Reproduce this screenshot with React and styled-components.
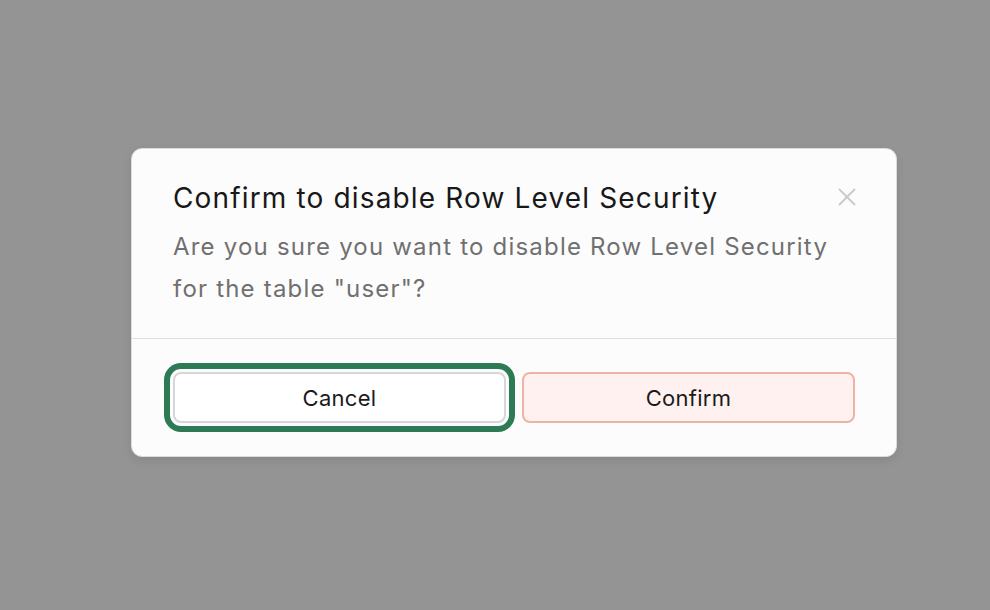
import React from 'react'
import styled, { createGlobalStyle } from 'styled-components'

const GlobalStyle = createGlobalStyle`
  html, body {
    margin: 0;
    padding: 0;
    background: #949494;
  }
  body {
    font-family: Inter, "Noto Sans", sans-serif;
  }
`

const Overlay = styled.div`
  width: 990px;
  height: 610px;
  box-sizing: border-box;
  padding: 148px 0 0 131px;
`

const Dialog = styled.div`
  width: 766px;
  box-sizing: border-box;
  background: #fcfcfc;
  border: 1px solid #dcdcdc;
  border-radius: 11px;
  box-shadow: 0 4px 10px rgba(0, 0, 0, 0.08);
  overflow: hidden;
`

const Header = styled.div`
  position: relative;
  padding: 29px 41px 28px 41px;
  border-bottom: 1px solid #dfdfdf;
`

const Title = styled.h2`
  margin: 0;
  font-size: 28px;
  font-weight: 400;
  color: #181818;
  line-height: 40px;
  letter-spacing: 1.15px;
`

const Desc = styled.p`
  margin: 0;
  margin-top: 8px;
  font-size: 24px;
  line-height: 42px;
  color: #707070;
  letter-spacing: 1.2px;
  max-width: 680px;
`

const CloseButton = styled.button`
  position: absolute;
  top: 37px;
  right: 38px;
  width: 22px;
  height: 22px;
  padding: 0;
  border: none;
  background: transparent;
  color: #c9c9c9;
  display: flex;
  align-items: center;
  justify-content: center;
`

const Footer = styled.div`
  display: grid;
  grid-template-columns: 1fr 1fr;
  gap: 16px;
  padding: 33px 41px 33px 41px;
`

const Button = styled.button`
  height: 51px;
  box-sizing: border-box;
  border-radius: 8px;
  font-family: inherit;
  font-size: 22px;
  letter-spacing: 0.3px;
  color: #1b1b1b;
  border: 2px solid ${(p) => (p.$danger ? '#eeb3a4' : '#d6d6d6')};
  background: ${(p) => (p.$danger ? '#fff1ef' : '#ffffff')};
  box-shadow: ${(p) => (p.$focused ? '0 0 0 3px #fcfcfc, 0 0 0 9px #2e7a55' : 'none')};
`

export default function App() {
  return (
    <>
      <GlobalStyle />
      <Overlay>
        <Dialog>
          <Header>
            <Title>Confirm to disable Row Level Security</Title>
            <Desc>Are you sure you want to disable Row Level Security for the table "user"?</Desc>
            <CloseButton aria-label="Close">
              <svg width="20" height="20" viewBox="0 0 20 20" fill="none" stroke="currentColor" strokeWidth="1.8" strokeLinecap="round">
                <path d="M2.5 2.5 L17.5 17.5 M17.5 2.5 L2.5 17.5" />
              </svg>
            </CloseButton>
          </Header>
          <Footer>
            <Button $focused>Cancel</Button>
            <Button $danger>Confirm</Button>
          </Footer>
        </Dialog>
      </Overlay>
    </>
  )
}
